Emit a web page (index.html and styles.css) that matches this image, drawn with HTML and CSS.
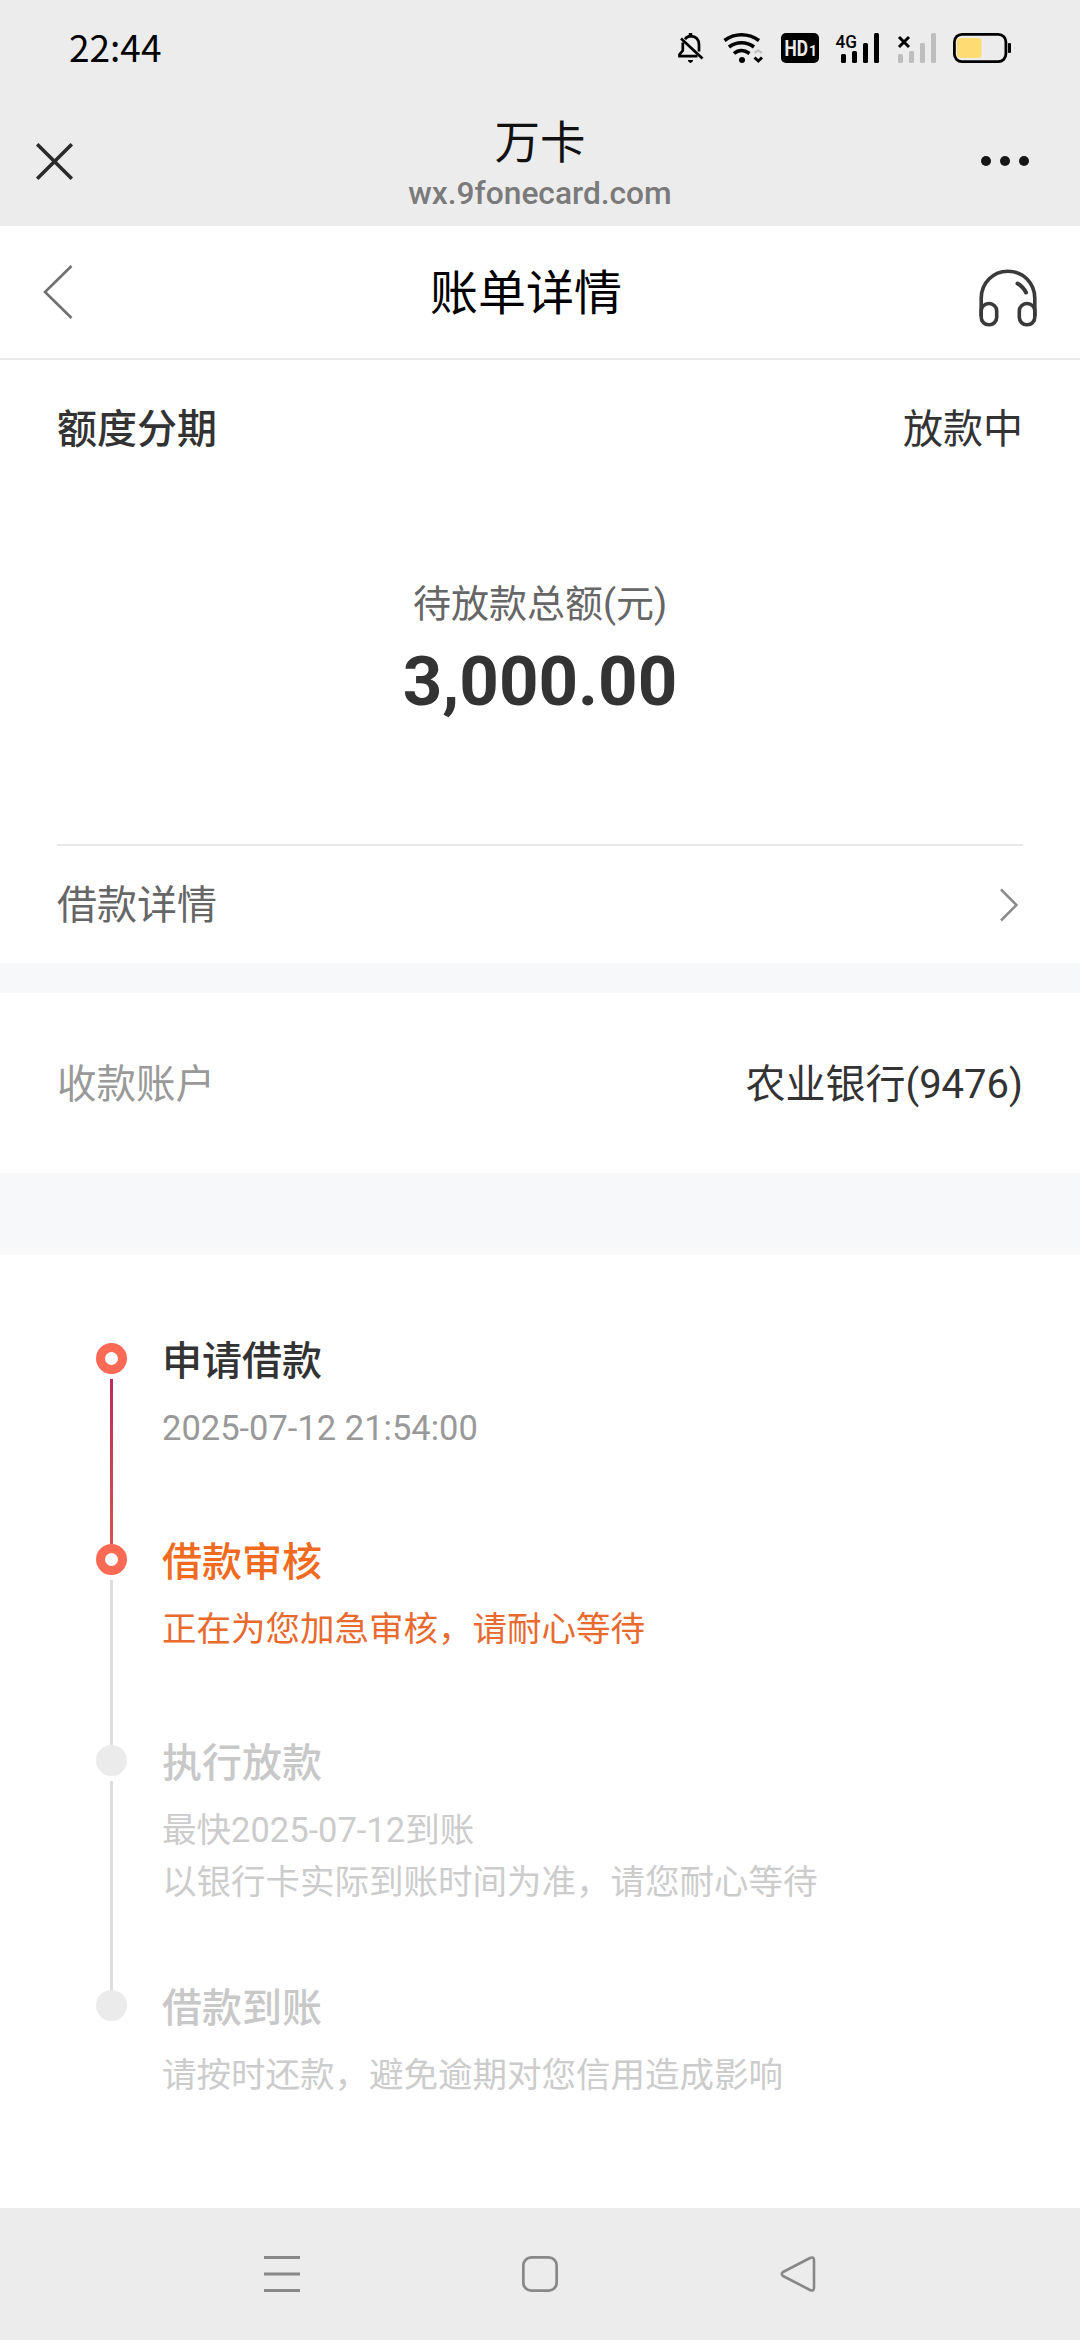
FILE: index.html
```html
<!DOCTYPE html>
<html lang="zh-CN">
<head>
<meta charset="utf-8">
<title>账单详情</title>
<link rel="stylesheet" href="styles.css">
</head>
<body>
<div class="screen">
  <header class="chrome">
    <div class="status">
      <span class="clock">22:44</span>
      <div class="status-icons">
        <svg width="27" height="30" viewBox="0 0 27 30" fill="none" stroke="#000" stroke-width="2.7">
          <path d="M7 6.2Q9 3.4 12.5 3.2Q21 3.600 21 12V18.500" />
          <path d="M4.800 9.500V17.500L1.500 21.500V23.200H19.500" />
          <path d="M3 5.500L24.500 25.500" />
          <path d="M12.500 0V3" stroke-width="3.500" />
          <path d="M9.800 27H15.200Q14.500 30 12.500 30Q10.500 30 9.800 27Z" fill="#000" stroke="none" />
        </svg>
        <svg class="wifi" width="41" height="30" viewBox="0 0 41 30" fill="none" stroke="#000" stroke-width="3.600">
          <path d="M1.500 7.500Q9 1.800 18.500 1.800T36 7.500" />
          <path d="M6 14Q11.500 9.800 18.500 9.800T31 14" />
          <path d="M11 20.500Q14.500 17.500 18.500 17.500T26.500 20.500" />
          <circle cx="19" cy="27" r="3" fill="#000" stroke="none" />
          <path d="M31.500 20L35.300 17.500L39 20" stroke="#c4c4c4" stroke-width="2.500" />
          <path d="M31.500 24.500L35.300 28L39 24.500" stroke-width="3" />
        </svg>
        <svg width="38" height="30" viewBox="0 0 38 30">
          <rect width="38" height="30" rx="5" />
          <text class="hd" x="3.500" y="23" textLength="23.500" lengthAdjust="spacingAndGlyphs">HD</text>
          <text class="hd-sub" x="28" y="23">1</text>
        </svg>
        <svg width="45" height="30" viewBox="0 0 45 30">
          <text class="net" x="0.500" y="14.500" textLength="21.500" lengthAdjust="spacingAndGlyphs">4G</text>
          <g><rect x="6" y="21" width="5" height="9" rx="1.500" /><rect x="17" y="18" width="5" height="12" rx="1.500" /><rect x="28" y="10" width="5" height="20" rx="1.500" /><rect x="39" y="0" width="5" height="30" rx="1.500" /></g>
        </svg>
        <svg width="40" height="30" viewBox="0 0 40 30">
          <path d="M2 4L12 14M12 4L2 14" stroke="#000" stroke-width="3" />
          <g fill="#bebebe"><rect x="1" y="21" width="5" height="9" rx="1.500" /><rect x="12" y="18" width="5" height="12" rx="1.500" /><rect x="23" y="10" width="5" height="20" rx="1.500" /><rect x="34" y="0" width="5" height="30" rx="1.500" /></g>
        </svg>
        <svg width="58" height="30" viewBox="0 0 58 30">
          <rect x="1.400" y="1.400" width="51.500" height="27.200" rx="7.500" fill="none" stroke="#000" stroke-width="2.800" />
          <rect x="4" y="5" width="24.500" height="20" rx="3.500" fill="#ffdc73" />
          <rect x="55" y="10" width="3" height="10" rx="1" />
        </svg>
      </div>
    </div>
    <div class="titlebar">
      <svg width="37" height="37" viewBox="0 0 37 37" fill="none" stroke="#2b2b2b" stroke-width="3.600"><path d="M1.200 1.200L35.800 35.800M35.800 1.200L1.200 35.800" /></svg>
      <div class="site">
        <div class="site-name">万卡</div>
        <div class="site-url">wx.9fonecard.com</div>
      </div>
      <svg width="48" height="10" viewBox="0 0 48 10" fill="#161616"><circle cx="5" cy="5" r="5" /><circle cx="24" cy="5" r="5" /><circle cx="43" cy="5" r="5" /></svg>
    </div>
  </header>

  <nav class="nav">
    <svg width="30" height="54" viewBox="0 0 30 54" fill="none" stroke="#707070" stroke-width="2.600"><path d="M28.500 1L2 27L28.500 53" /></svg>
    <h1 class="nav-title">账单详情</h1>
    <svg class="headset" width="58" height="58" viewBox="0 0 58 58" fill="none" stroke="#3a3a3a" stroke-width="3.600">
      <path d="M2.200 47V29.500C2.200 14 14 2.200 29 2.200S55.800 14 55.800 29.500V47" />
      <rect x="2.200" y="34.500" width="15.500" height="21.300" rx="7.500" />
      <rect x="40.300" y="34.500" width="15.500" height="21.300" rx="7.500" />
      <path d="M38.500 14.500Q44 17.500 47 23.500" stroke-width="4" stroke-linecap="round" />
    </svg>
  </nav>

  <section class="summary">
    <div class="row summary-head"><strong>额度分期</strong><span>放款中</span></div>
    <div class="total">
      <div class="total-label">待放款总额(元)</div>
      <div class="total-value">3,000.00</div>
    </div>
    <div class="row loan-link">
      <span>借款详情</span>
      <svg width="20" height="34" viewBox="0 0 20 34" fill="none" stroke="#8c8c8c" stroke-width="2.500"><path d="M2 1.500L17.500 17L2 32.500" /></svg>
    </div>
  </section>

  <section class="row account"><span class="account-label">收款账户</span><span class="account-value">农业银行(9476)</span></section>

  <ol class="timeline">
    <li class="step done">
      <div class="rail"><i class="dot"></i><i class="line"></i></div>
      <div class="info"><h2>申请借款</h2><p>2025-07-12 21:54:00</p></div>
    </li>
    <li class="step active">
      <div class="rail"><i class="dot"></i><i class="line"></i></div>
      <div class="info"><h2>借款审核</h2><p>正在为您加急审核，请耐心等待</p></div>
    </li>
    <li class="step pending tall">
      <div class="rail"><i class="dot"></i><i class="line"></i></div>
      <div class="info"><h2>执行放款</h2><p>最快2025-07-12到账<br>以银行卡实际到账时间为准，请您耐心等待</p></div>
    </li>
    <li class="step pending">
      <div class="rail"><i class="dot"></i></div>
      <div class="info"><h2>借款到账</h2><p>请按时还款，避免逾期对您信用造成影响</p></div>
    </li>
  </ol>

  <footer class="sysnav">
    <svg width="36" height="36" viewBox="0 0 36 36" fill="#888"><rect width="36" height="3" /><rect y="16.500" width="36" height="3" /><rect y="33" width="36" height="3" /></svg>
    <svg width="36" height="36" viewBox="0 0 36 36" fill="none" stroke="#888" stroke-width="2.700"><rect x="1.350" y="1.350" width="33.300" height="33.300" rx="8" /></svg>
    <svg width="36" height="36" viewBox="0 0 36 36" fill="none" stroke="#888" stroke-width="2.600" stroke-linejoin="round"><path d="M30 2Q34 0.500 34 4V32Q34 35.500 30 34L3 20Q0.500 18 3 16Z" /></svg>
  </footer>
</div>
</body>
</html>
```
FILE: styles.css
```css
* { box-sizing: border-box; margin: 0; padding: 0; }

body {
  background: #fff;
  color: #333;
  font-family: Roboto, "Noto Sans CJK SC", sans-serif;
  font-size: 40px;
}

svg { display: block; flex: none; overflow: visible; }

.screen { width: 1080px; height: 2340px; display: flex; flex-direction: column; overflow: hidden; }

.chrome { height: 226px; flex: none; background: #ececec; }
.status { height: 96px; padding: 0 69px; display: flex; justify-content: space-between; align-items: center; }
.clock { padding-bottom: 4px; font: 37px/92px "Noto Sans CJK SC", sans-serif; color: #000; }
.status-icons { display: flex; column-gap: 16.500px; }
.wifi { margin-left: 2px; }
.hd { font: bold 22px "Roboto", sans-serif; fill: #ececec; }
.hd-sub { font: bold 14px "Roboto", sans-serif; fill: #ececec; }
.net { font: 500 19px "Roboto", sans-serif; }

.titlebar { height: 130px; padding: 0 51px 0 36px; display: grid; grid-template-columns: 52px 1fr 37px; align-items: center; }
.titlebar > svg:last-child { justify-self: end; }
.site { padding-top: 5px; text-align: center; }
.site-name { font-size: 45.500px; line-height: 60px; color: #111; }
.site-url { font-size: 31.700px; line-height: 40px; font-weight: 500; color: #7a7a7a; }

.nav { height: 134px; flex: none; padding: 0 43px; border-bottom: 2px solid #e8e8e8; display: flex; align-items: center; justify-content: space-between; }
.nav-title { padding-bottom: 7px; font-size: 48px; font-weight: 400; color: #000; }
.headset { margin-top: 12px; }

.row { display: flex; align-items: center; justify-content: space-between; }
.row > span, .row > strong { padding-bottom: 5px; }
.summary { padding: 0 57px; }
.summary-head { height: 136px; }
.summary-head strong { font-weight: 500; }
.total { height: 348px; padding-top: 80px; text-align: center; }
.total-label { font-size: 38px; line-height: 56px; color: #666; }
.total-value { margin-top: 2px; font-size: 69px; line-height: 96px; font-weight: 700; }
.loan-link { height: 119px; padding-right: 4px; border-top: 2px solid #e8e8e8; color: #666; }

.account { flex: none; height: 210px; padding: 0 57px; border-top: 30px solid #f7f8fa; }
.account-label { color: #999; font-size: 39.500px; }
.account-value { color: #333; }

.timeline { flex: 1; padding: 86px 96px 0; border-top: 75px solid #f7f8fa; list-style: none; box-shadow: inset 0 7px #f9f9fa; }
.step { height: 201px; display: flex; column-gap: 35px; }
.step.tall { height: 245px; }
.rail { width: 31px; display: flex; flex-direction: column; align-items: center; padding-top: 9px; }
.dot { width: 31px; height: 31px; flex: none; border-radius: 50%; background: #ebebeb; }
.done .dot, .active .dot { background: #fff; border: 9.500px solid #fc6a55; }
.line { width: 3px; flex: 1; margin: 5px 0 -9px; background: #dedede; }
.done .line { background: linear-gradient(#bd2b5b, #d5534e); }
.info h2 { font-size: 40px; line-height: 56px; font-weight: 500; color: #333; }
.info p { margin-top: 12px; font-size: 34.500px; line-height: 52px; color: #999; white-space: nowrap; }
.active h2 { color: #f06a20; }
.active p { color: #e86a2e; }
.pending h2 { color: #c8c8c8; }
.pending p { color: #ccc; }

.sysnav { height: 132px; flex: none; background: #ececec; padding: 0 264px; display: flex; align-items: center; justify-content: space-between; }
```
